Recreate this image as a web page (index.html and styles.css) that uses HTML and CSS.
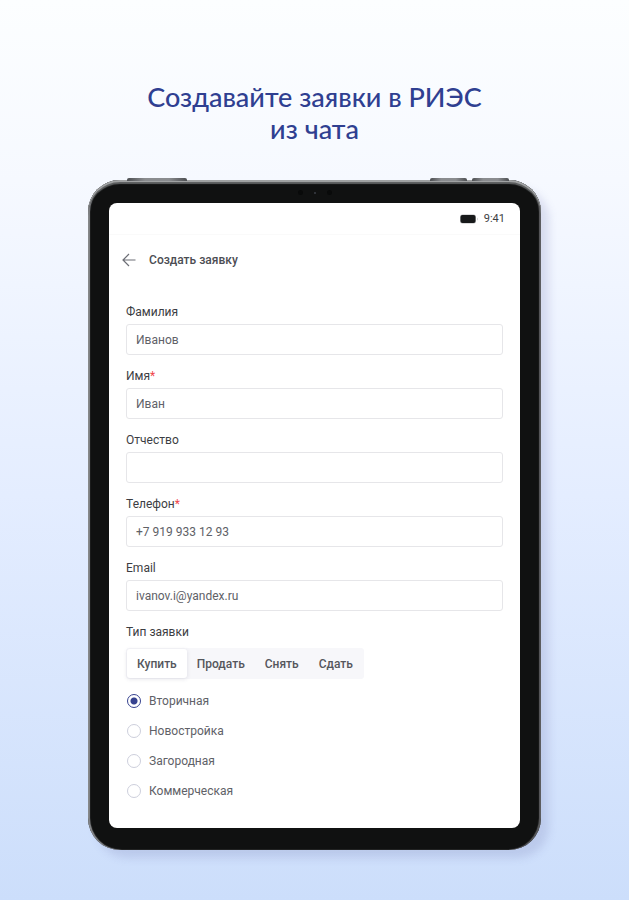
FILE: index.html
```html
<!DOCTYPE html>
<html lang="ru">
<head>
<meta charset="utf-8">
<meta name="viewport" content="width=device-width, initial-scale=1">
<title>Создать заявку</title>
<link rel="stylesheet" href="styles.css">
</head>
<body>
<main class="promo">
  <h1 class="promo-title">Создавайте заявки в РИЭС<br>из чата</h1>
  <div class="tablet">
    <span class="side-key key-power"></span>
    <span class="side-key key-up"></span>
    <span class="side-key key-down"></span>
    <span class="sensors"><i></i><i class="lens"></i><i></i></span>
    <section class="screen">
      <div class="status-bar">
        <svg class="battery" viewBox="0 0 18 10" aria-hidden="true"><rect x="0" y="0.5" width="16" height="9" rx="2.5" fill="#b9babb"/><rect x="0.5" y="1" width="15" height="8" rx="2" fill="#17191a"/><path d="M17 3.500v3q1-.5 1-1.500t-1-1.500" fill="#d4d4d4"/></svg>
        <span>9:41</span>
      </div>
      <header class="app-bar">
        <button class="back" type="button" aria-label="Назад">
          <svg viewBox="0 0 14 14" aria-hidden="true"><path d="M7 1 1 7 7 13M1 7H13.500" fill="none" stroke="#6d6f76" stroke-width="1.200"/></svg>
        </button>
        <h2 class="app-title">Создать заявку</h2>
      </header>
      <form class="form">
        <div class="field">
          <label for="surname">Фамилия</label>
          <input id="surname" type="text" value="Иванов">
        </div>
        <div class="field">
          <label for="name">Имя<span class="required">*</span></label>
          <input id="name" type="text" value="Иван">
        </div>
        <div class="field">
          <label for="patronymic">Отчество</label>
          <input id="patronymic" type="text">
        </div>
        <div class="field">
          <label for="phone">Телефон<span class="required">*</span></label>
          <input id="phone" type="tel" value="+7 919 933 12 93">
        </div>
        <div class="field">
          <label for="email">Email</label>
          <input id="email" type="email" value="ivanov.i@yandex.ru">
        </div>
        <div class="group-label" id="kind-label">Тип заявки</div>
        <div class="tabs" role="group" aria-labelledby="kind-label">
          <button class="tab tab-active" type="button">Купить</button>
          <button class="tab" type="button">Продать</button>
          <button class="tab" type="button">Снять</button>
          <button class="tab" type="button">Сдать</button>
        </div>
        <div class="options">
          <label class="option"><input type="radio" name="market" checked>Вторичная</label>
          <label class="option"><input type="radio" name="market">Новостройка</label>
          <label class="option"><input type="radio" name="market">Загородная</label>
          <label class="option"><input type="radio" name="market">Коммерческая</label>
        </div>
      </form>
    </section>
  </div>
</main>
</body>
</html>
```
FILE: styles.css
```css
* { box-sizing: border-box; }

body {
  margin: 0;
  min-height: 100vh;
  background: linear-gradient(180deg, #fcfeff 0%, #f6f9ff 20%, #e4edff 55%, #ccdefb 100%);
  font-family: Roboto, "Liberation Sans", sans-serif;
  font-size: 12px;
  line-height: 16px;
  color: #3c3d42;
}

.promo { padding: 81px 14% 50px; }

.promo-title {
  margin: 0 0 35px;
  text-align: center;
  font-family: Lato, "Open Sans", sans-serif;
  font-size: 27px;
  line-height: 32px;
  font-weight: 500;
  color: #2f3f91;
  white-space: nowrap;
}

.tablet {
  position: relative;
  padding: 23px 21px 22px;
  border-radius: 32px;
  background: #101111;
  box-shadow:
    inset 0 2px 0 #a0a2a3,
    inset 0 4px 1px #5f6162,
    inset 2px 0 1px #8b8d90,
    inset -2px 0 1px #5c5d60,
    8px 8px 8px rgba(110, 115, 175, 0.2);
}

.side-key {
  position: absolute;
  top: -2px;
  height: 3px;
  border-radius: 2px 2px 0 0;
  background: linear-gradient(90deg, #4c4e51, #8a8c8f 30%, #8a8c8f 70%, #4c4e51);
}
.key-power { left: 39px; width: 60px; }
.key-up { right: 74px; width: 37px; }
.key-down { right: 32px; width: 37px; }

.sensors {
  position: absolute;
  top: 10px;
  left: 0;
  right: 0;
  display: flex;
  justify-content: center;
  align-items: center;
  gap: 11px;
}
.sensors i {
  width: 5px;
  height: 5px;
  border-radius: 50%;
  background: #090a0a;
}
.sensors .lens {
  width: 2px;
  height: 2px;
  background: #3a3e46;
}

.screen {
  padding-bottom: 29px;
  border-radius: 8px;
  background: #fff;
}

.status-bar {
  display: flex;
  justify-content: flex-end;
  align-items: center;
  gap: 6px;
  height: 32px;
  padding: 0 15px;
  border-bottom: 1px solid #fafafa;
  font-size: 11px;
}
.battery { width: 18px; height: 10px; }

.app-bar {
  display: flex;
  align-items: center;
  gap: 13px;
  height: 50px;
  padding: 0 13px;
}
.back {
  width: 14px;
  height: 14px;
  padding: 0;
  border: 0;
  background: none;
}
.back svg { display: block; width: 14px; height: 14px; }
.app-title {
  margin: 0;
  font-size: 12px;
  line-height: 16px;
  font-weight: 500;
  color: #4c4d53;
}

.form { padding: 19px 17px 0; }

.field {
  display: flex;
  flex-direction: column;
  gap: 4px;
  margin-bottom: 13px;
}
.required { color: #f0464b; }

.field input {
  width: 100%;
  height: 31px;
  padding: 0 9px;
  border: 1px solid #e6e6e9;
  border-radius: 3px;
  background: #fff;
  font: inherit;
  color: #606167;
}

.tabs {
  display: inline-flex;
  height: 31px;
  margin-top: 8px;
  padding: 1px;
  border-radius: 3px;
  background: #f7f7fa;
}
.tab {
  padding: 0 10px;
  border: 0;
  border-radius: 3px;
  background: none;
  font: inherit;
  font-weight: 500;
  color: #55565c;
}
.tab-active {
  background: #fff;
  box-shadow: 0 1px 4px rgba(60, 60, 90, 0.14);
}

.options {
  display: flex;
  flex-direction: column;
  gap: 14px;
  margin-top: 14px;
}
.option {
  display: flex;
  align-items: center;
  gap: 8px;
  color: #606167;
}
.option input {
  appearance: none;
  width: 14px;
  height: 14px;
  margin: 0 0 0 1px;
  border: 1px solid #cdcfdc;
  border-radius: 50%;
  background: #fff;
}
.option input:checked {
  border-color: #36428f;
  background: radial-gradient(circle, #36428f 3px, #fff 4px);
}
```
